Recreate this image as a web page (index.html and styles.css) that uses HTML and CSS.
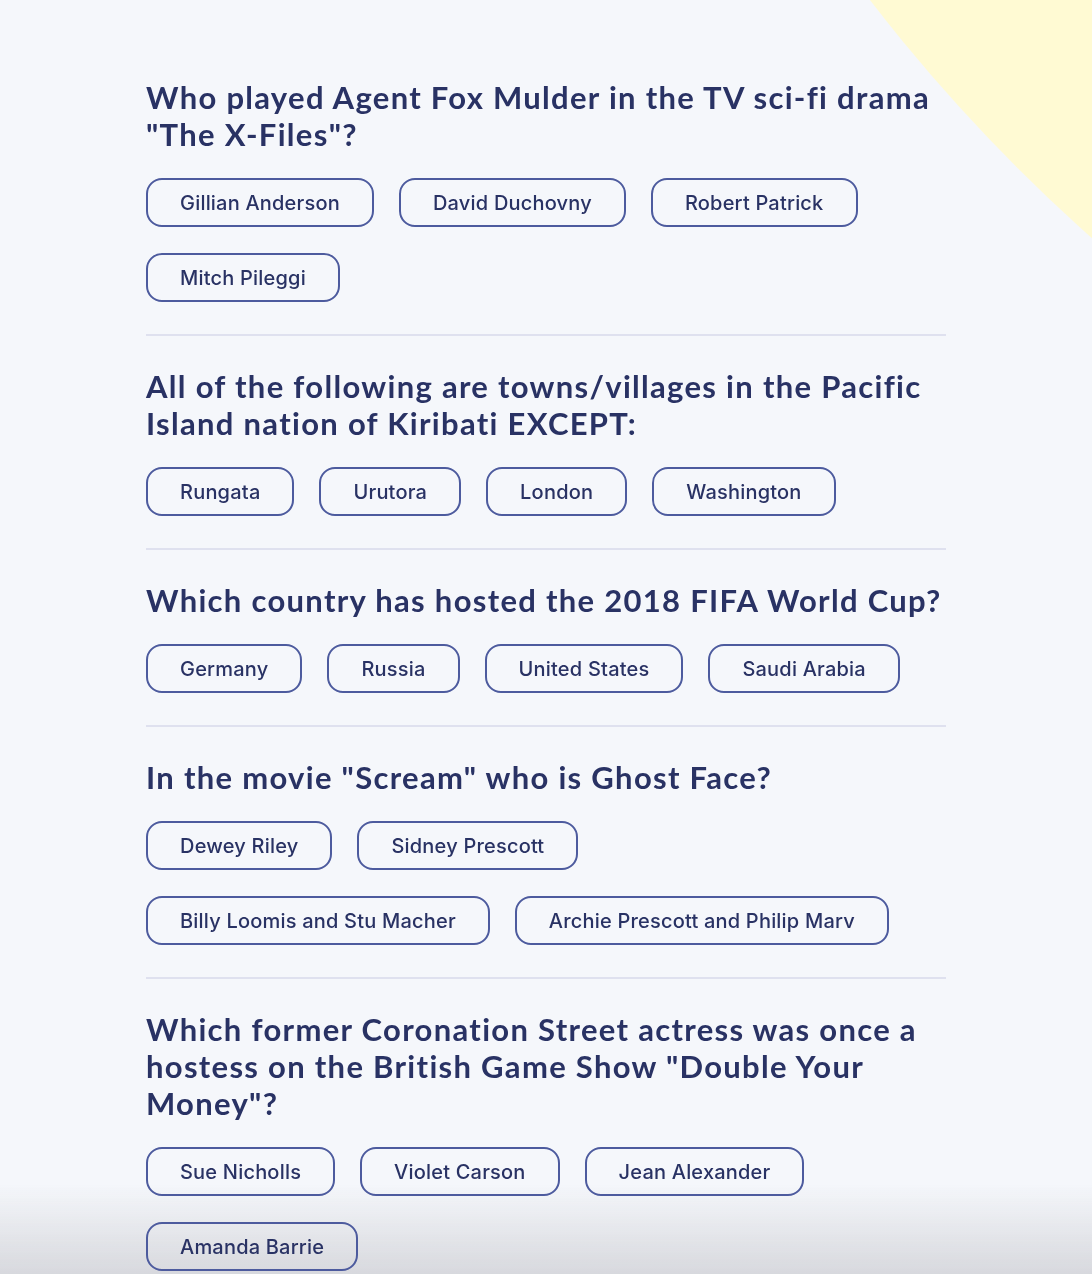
FILE: index.html
```html
<!DOCTYPE html>
<html lang="en">
<head>
<meta charset="utf-8">
<title>Quiz</title>
<link rel="stylesheet" href="styles.css">
</head>
<body>
<svg class="blob" width="240" height="250" viewBox="852 0 240 250" aria-hidden="true">
  <circle cx="2246" cy="-1060" r="1737" fill="#fffad3"/>
</svg>
<div class="bottom-shade" aria-hidden="true"></div>
<main class="quiz">
  <section class="question">
    <h2 class="q-title">Who played Agent Fox Mulder in the TV sci-fi drama "The X-Files"?</h2>
    <div class="answers">
      <button class="answer">Gillian Anderson</button>
      <button class="answer">David Duchovny</button>
      <button class="answer">Robert Patrick</button>
      <button class="answer">Mitch Pileggi</button>
    </div>
  </section>
  <section class="question">
    <h2 class="q-title">All of the following are towns/villages in the Pacific Island nation of Kiribati EXCEPT:</h2>
    <div class="answers">
      <button class="answer">Rungata</button>
      <button class="answer">Urutora</button>
      <button class="answer">London</button>
      <button class="answer">Washington</button>
    </div>
  </section>
  <section class="question">
    <h2 class="q-title">Which country has hosted the 2018 FIFA World Cup?</h2>
    <div class="answers">
      <button class="answer">Germany</button>
      <button class="answer">Russia</button>
      <button class="answer">United States</button>
      <button class="answer">Saudi Arabia</button>
    </div>
  </section>
  <section class="question">
    <h2 class="q-title">In the movie "Scream" who is Ghost Face?</h2>
    <div class="answers">
      <button class="answer">Dewey Riley</button>
      <button class="answer">Sidney Prescott</button>
      <button class="answer">Billy Loomis and Stu Macher</button>
      <button class="answer">Archie Prescott and Philip Marv</button>
    </div>
  </section>
  <section class="question">
    <h2 class="q-title">Which former Coronation Street actress was once a hostess on the British Game Show "Double Your Money"?</h2>
    <div class="answers">
      <button class="answer">Sue Nicholls</button>
      <button class="answer">Violet Carson</button>
      <button class="answer">Jean Alexander</button>
      <button class="answer">Amanda Barrie</button>
    </div>
  </section>
</main>
</body>
</html>
```
FILE: styles.css
```css
html, body {
  margin: 0;
  padding: 0;
}
body {
  background: #f5f7fb;
  color: #293264;
  font-family: "Inter", "Liberation Sans", sans-serif;
  min-height: 1274px;
  overflow: hidden;
  position: relative;
}
.blob {
  position: absolute;
  top: 0;
  right: 0;
  display: block;
}
.quiz {
  position: relative;
  width: 800px;
  margin: 0 auto;
  padding-top: 47px;
}
.question {
  padding: 32px 0 32px;
  border-bottom: 2px solid #dfe1ef;
}
.question:last-child {
  border-bottom: none;
}
.q-title {
  margin: 0 0 25px;
  font-family: "Lato", "Liberation Sans", sans-serif;
  font-weight: 700;
  font-size: 31px;
  line-height: 37px;
  letter-spacing: 1.3px;
  color: #293264;
}
.answers {
  display: flex;
  flex-wrap: wrap;
  gap: 26px 25px;
}
.answer {
  height: 49px;
  padding: 0 32px;
  border: 2px solid #4d5b9e;
  border-radius: 16px;
  background: transparent;
  color: #293264;
  font-family: "Inter", "Liberation Sans", sans-serif;
  font-weight: 500;
  font-size: 20px;
  letter-spacing: 0.2px;
  cursor: pointer;
}
.bottom-shade {
  position: fixed;
  left: 0;
  right: 0;
  bottom: 0;
  height: 90px;
  background: linear-gradient(to bottom, rgba(210, 211, 216, 0) 0%, rgba(212, 213, 218, 0.9) 100%);
  pointer-events: none;
}
```
